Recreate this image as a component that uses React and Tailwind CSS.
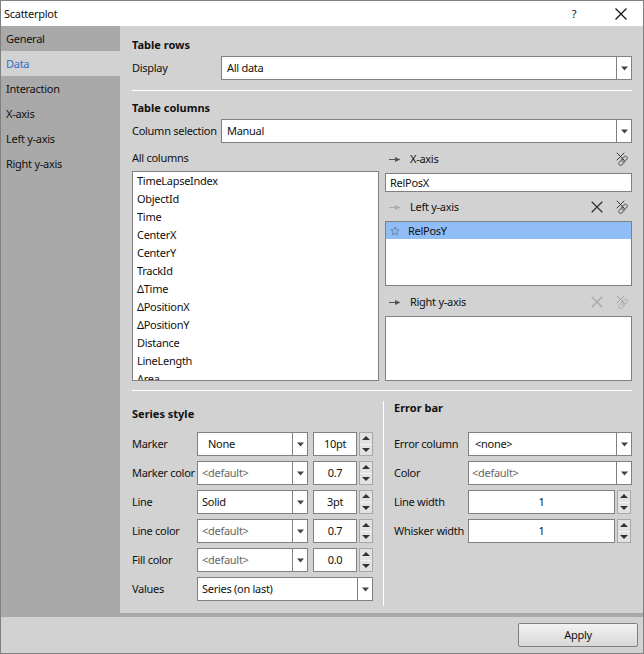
const FONT = "font-['Noto_Sans',sans-serif]";

function Caret() {
  return (
    <svg width="9" height="5" viewBox="0 0 9 5" className="block">
      <path d="M1 0.5H8L4.5 4.5Z" fill="#444" />
    </svg>
  );
}

function Combo({ children, muted, pad = "pl-1", arrow = "w-[15px]" }) {
  return (
    <div className="flex h-6 w-full border border-[#808080] bg-white">
      <div className={`flex flex-1 items-center ${pad} ${muted ? "text-[#666]" : "text-[#111]"}`}>{children}</div>
      <div className={`flex ${arrow} shrink-0 items-center justify-center border-l border-[#808080]`}>
        <Caret />
      </div>
    </div>
  );
}

function Spin({ value, fieldWidth = "w-[44px]" }) {
  return (
    <div className="flex h-6 items-stretch gap-[2px]">
      <div className={`flex ${fieldWidth} items-center justify-center border border-[#808080] bg-white text-[#111]`}>{value}</div>
      <div className="flex w-[14px] flex-col border border-[#a8a8a8] bg-[#e2e2e2]">
        <div className="flex flex-1 items-center justify-center border-b border-[#f4f4f4]">
          <svg width="8" height="4" viewBox="0 0 8 4"><path d="M0 4H8L4 0Z" fill="#333" /></svg>
        </div>
        <div className="flex flex-1 items-center justify-center">
          <svg width="8" height="4" viewBox="0 0 8 4"><path d="M0 0H8L4 4Z" fill="#333" /></svg>
        </div>
      </div>
    </div>
  );
}

function Arrow({ light }) {
  const c = light ? "#aaaaaa" : "#555555";
  return (
    <svg width="12" height="7" viewBox="0 0 12 7" className="block">
      <path d="M0 3.5H7" stroke={c} strokeWidth="1" />
      <path d="M6 1L11.5 3.5L6 6Z" fill={c} />
    </svg>
  );
}

function Cross({ light }) {
  return (
    <svg width="12" height="12" viewBox="0 0 12 12" className="block">
      <path d="M0.7 0.7L11.3 11.3M11.3 0.7L0.7 11.3" stroke={light ? "#a8a8a8" : "#333"} strokeWidth="1.3" fill="none" />
    </svg>
  );
}

function Unlink({ light }) {
  const a = light ? "#b4b4b4" : "#6a6a6a";
  const b = light ? "#a0a0a0" : "#3c3c3c";
  return (
    <svg width="12" height="14" viewBox="0 0 12 14" className="block">
      <rect x="5.2" y="5.2" width="6.4" height="3.6" rx="1.6" transform="rotate(-45 8.4 7)" stroke={a} strokeWidth="1" fill="none" />
      <rect x="2.4" y="8.6" width="6.4" height="3.6" rx="1.6" transform="rotate(-45 5.6 10.4)" stroke={a} strokeWidth="1" fill="none" />
      <path d="M0.8 0.8L8.2 8.2M8.2 0.8L0.8 8.2" stroke={b} strokeWidth="1" fill="none" />
    </svg>
  );
}

function AxisHead({ label, light, cross, crossLight, unlinkLight }) {
  return (
    <div className="flex h-4 items-center">
      <div className="ml-1 w-[21px]"><Arrow light={light} /></div>
      <span className="text-[#111]">{label}</span>
      <div className="ml-auto flex items-center gap-[13px] pr-[4px]">
        {cross && <Cross light={crossLight} />}
        <Unlink light={unlinkLight} />
      </div>
    </div>
  );
}

function FormRow({ label, labelWidth, children }) {
  return (
    <div className="flex h-6 items-center">
      <div className={`${labelWidth} shrink-0 whitespace-nowrap text-[#111]`}>{label}</div>
      <div className="flex min-w-0 flex-1 items-center">{children}</div>
    </div>
  );
}

function SeriesRow({ label, combo, muted, pad, spin }) {
  return (
    <FormRow label={label} labelWidth="w-[65px]">
      <div className="w-[111px]"><Combo muted={muted} pad={pad}>{combo}</Combo></div>
      <div className="ml-[5px]"><Spin value={spin} /></div>
    </FormRow>
  );
}

const columns = ["TimeLapseIndex", "ObjectId", "Time", "CenterX", "CenterY", "TrackId", "ΔTime", "ΔPositionX", "ΔPositionY", "Distance", "LineLength", "Area"];
const tabs = ["General", "Data", "Interaction", "X-axis", "Left y-axis", "Right y-axis"];

export default function App() {
  return (
    <div className={`flex h-[654px] w-[644px] flex-col border border-[#808080] bg-[#d2d2d2] text-[11px] leading-4 tracking-[-0.28px] ${FONT}`}>
      <div className="flex h-[25px] shrink-0 items-center bg-white pl-[3px] text-[#111]">
        <span>Scatterplot</span>
        <span className="ml-auto w-[12px] text-center">?</span>
        <div className="ml-[35px] mr-[16px]">
          <svg width="12" height="12" viewBox="0 0 12 12" className="block"><path d="M0.5 0.5L11.5 11.5M11.5 0.5L0.5 11.5" stroke="#111" strokeWidth="1.2" /></svg>
        </div>
      </div>

      <div className="flex min-h-0 flex-1">
        <div className="w-[119px] shrink-0 bg-[#a9a9a9]">
          {tabs.map((t) => (
            <div key={t} className={`flex h-[25px] items-center pl-[5px] ${t === "Data" ? "bg-[#d2d2d2] text-[#2f6fc4]" : "text-[#111]"}`}>{t}</div>
          ))}
        </div>

        <div className="flex min-w-0 flex-1 flex-col pl-3 pr-[11px]">
          <div className="mt-[11px] h-4 font-bold tracking-normal text-[#111]">Table rows</div>
          <div className="mt-[3px] flex items-center">
            <div className="w-[89px] shrink-0 whitespace-nowrap text-[#111]">Display</div>
            <Combo pad="pl-[5px]">All data</Combo>
          </div>
          <div className="mt-[10px] h-px shrink-0 bg-white" />

          <div className="mt-[9px] h-4 font-bold tracking-normal text-[#111]">Table columns</div>
          <div className="mt-[3px] flex items-center">
            <div className="w-[89px] shrink-0 whitespace-nowrap text-[#111]">Column selection</div>
            <Combo pad="pl-[5px]">Manual</Combo>
          </div>

          <div className="mt-[7px] grid h-[231px] grid-cols-[247px_247px] gap-x-[6px]">
            <div className="flex min-h-0 flex-col">
              <div className="h-4 text-[#111]">All columns</div>
              <div className="mt-[5px] min-h-0 flex-1 overflow-hidden border border-[#808080] bg-white pl-1 text-[#111]">
                {columns.map((c) => <div key={c} className="flex h-[18px] items-center">{c}</div>)}
              </div>
            </div>
            <div className="flex min-h-0 flex-col">
              <div className="mt-px"><AxisHead label="X-axis" /></div>
              <div className="mt-[6px] flex h-[19px] items-center border border-[#808080] bg-white pl-1 text-[#111]">RelPosX</div>
              <div className="mt-[7px]"><AxisHead label="Left y-axis" light cross /></div>
              <div className="mt-[6px] h-[65px] border border-[#808080] bg-white">
                <div className="flex h-[17px] items-center bg-[#90bdf5] pl-1 text-[#111]">
                  <svg width="10" height="10" viewBox="0 0 12 12" className="mr-2 block">
                    <path d="M6 1.2L7.4 4.5L10.9 4.8L8.3 7.1L9 10.6L6 8.8L3 10.6L3.7 7.1L1.1 4.8L4.6 4.5Z" fill="none" stroke="#5f7d9f" strokeWidth="1" />
                  </svg>
                  RelPosY
                </div>
              </div>
              <div className="mt-2"><AxisHead label="Right y-axis" cross crossLight unlinkLight /></div>
              <div className="mt-[6px] min-h-0 flex-1 border border-[#808080] bg-white" />
            </div>
          </div>

          <div className="mt-[9px] h-px shrink-0 bg-white" />

          <div className="flex min-h-0 flex-1">
            <div className="w-[241px] shrink-0">
              <div className="mt-[15px] h-4 font-bold tracking-normal text-[#111]">Series style</div>
              <div className="mt-[10px] flex flex-col gap-[5px]">
                <SeriesRow label="Marker" combo="None" pad="pl-[10px]" spin="10pt" />
                <SeriesRow label="Marker color" combo="<default>" muted spin="0.7" />
                <SeriesRow label="Line" combo="Solid" spin="3pt" />
                <SeriesRow label="Line color" combo="<default>" muted spin="0.7" />
                <SeriesRow label="Fill color" combo="<default>" muted spin="0.0" />
                <FormRow label="Values" labelWidth="w-[65px]">
                  <Combo>Series (on last)</Combo>
                </FormRow>
              </div>
            </div>
            <div className="mb-[7px] ml-[10px] mt-[10px] w-px shrink-0 bg-white" />
            <div className="ml-[10px] min-w-0 flex-1">
              <div className="mt-[9px] h-4 font-bold tracking-normal text-[#111]">Error bar</div>
              <div className="mt-4 flex flex-col gap-[5px]">
                <FormRow label="Error column" labelWidth="w-[74px]"><Combo pad="pl-[6px]">{"<none>"}</Combo></FormRow>
                <FormRow label="Color" labelWidth="w-[74px]"><Combo muted pad="pl-[3px]">{"<default>"}</Combo></FormRow>
                <FormRow label="Line width" labelWidth="w-[74px]"><Spin value="1" fieldWidth="w-[147px]" /></FormRow>
                <FormRow label="Whisker width" labelWidth="w-[74px]"><Spin value="1" fieldWidth="w-[147px]" /></FormRow>
              </div>
            </div>
          </div>
        </div>
      </div>

      <div className="h-1 shrink-0 bg-[#a9a9a9]" />
      <div className="flex h-9 shrink-0 items-center justify-end pr-[5px]">
        <div className="flex h-6 w-[120px] items-center justify-center rounded-[2px] border border-[#808080] bg-gradient-to-b from-[#f2f2f2] to-[#d8d8d8] text-[#111]">Apply</div>
      </div>
    </div>
  );
}
